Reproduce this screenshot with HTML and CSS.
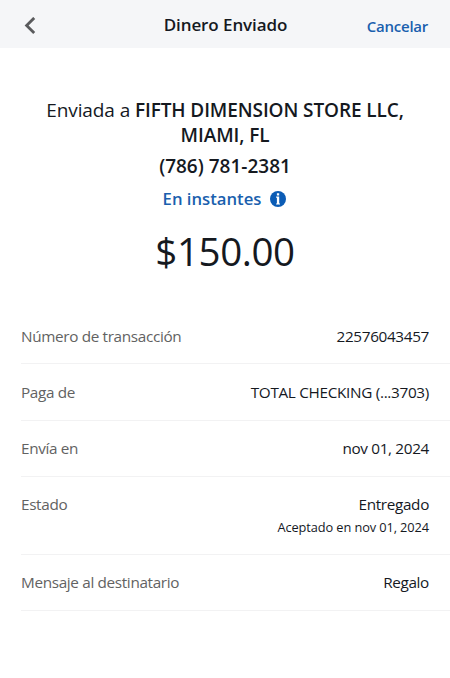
FILE: index.html
```html
<!DOCTYPE html>
<html lang="es">
<head>
<meta charset="utf-8">
<title>Dinero Enviado</title>
<link rel="stylesheet" href="styles.css">
</head>
<body>
<header class="bar">
  <svg class="back" width="12" height="18" viewBox="0 0 12 18" fill="none" stroke="#5a5b5d" stroke-width="2.8"><path d="M10.2 .9 2.6 8.5 10.2 16.1"/></svg>
  <h1 class="title">Dinero Enviado</h1>
  <span class="cancel">Cancelar</span>
</header>
<main>
  <section class="summary">
    <p class="recipient">Enviada a <b>FIFTH DIMENSION STORE LLC,<br>MIAMI, FL</b></p>
    <p class="phone">(786) 781-2381</p>
    <p class="speed"><span>En instantes</span>
      <svg class="info" width="16" height="16" viewBox="0 0 16 16"><circle cx="8" cy="8" r="8" fill="#0b5cb5"/><path d="M6.9 2.2h2.3v2.2H6.9zM6.1 5.6h3.1v6.8h.8v1.1H6.1v-1.1h.8V6.7h-.8z" fill="#fff"/></svg>
    </p>
    <p class="amount">$150.00</p>
  </section>
  <dl class="details">
    <div class="row"><dt>Número de transacción</dt><dd>22576043457</dd></div>
    <div class="row source"><dt>Paga de</dt><dd class="account">TOTAL CHECKING (...3703)</dd></div>
    <div class="row"><dt>Envía en</dt><dd>nov 01, 2024</dd></div>
    <div class="row status"><dt>Estado</dt><dd>Entregado<small>Aceptado en nov 01, 2024</small></dd></div>
    <div class="row"><dt>Mensaje al destinatario</dt><dd>Regalo</dd></div>
  </dl>
</main>
</body>
</html>
```
FILE: styles.css
```css
* { box-sizing: border-box; }
body { margin: 0; background: #fff; color: #15191f; font-family: "Open Sans", sans-serif; }
p, h1, dl, dd { margin: 0; }
.bar { height: 48px; background: #f5f6f8; display: grid; grid-template-columns: 1fr auto 1fr; align-items: center; padding: 3px 22px 0 24px; }
.title { font-size: 17px; line-height: 24px; font-weight: 550; letter-spacing: -0.08px; margin-right: 1px; margin-top: -1px; }
.cancel { justify-self: end; color: #1a5fae; font-size: 15px; font-weight: 550; letter-spacing: -0.25px; }
.summary { padding-top: 50px; text-align: center; height: 260px; }
.recipient { font-size: 19px; line-height: 25px; letter-spacing: -0.1px; }
.recipient b { font-weight: 550; }
.phone { font-size: 19px; line-height: 26px; font-weight: 550; margin-top: 5px; }
.speed { display: flex; justify-content: center; align-items: center; gap: 9px; margin-top: 7px; padding-right: 1px; color: #1a5fae; font-size: 16.7px; line-height: 26px; font-weight: 550; }
.amount { font-size: 38.5px; line-height: 52px; margin-top: 13px; letter-spacing: -0.4px; }
.row { height: 56px; margin-left: 21px; padding: 15px 21px 0 0; display: flex; justify-content: space-between; border-bottom: 1px solid #f2f2f3; font-size: 15.3px; line-height: 24px; letter-spacing: -0.34px; }
.row:first-child { padding-top: 16px; }
.row.source { height: 57px; padding-top: 16px; }
.row dt { color: #626262; }
.row dd { text-align: right; }
.row .account { letter-spacing: -0.31px; }
.row.status { height: 78px; }
.row small { display: block; font-size: 12.8px; line-height: 22px; letter-spacing: -0.1px; }
```
